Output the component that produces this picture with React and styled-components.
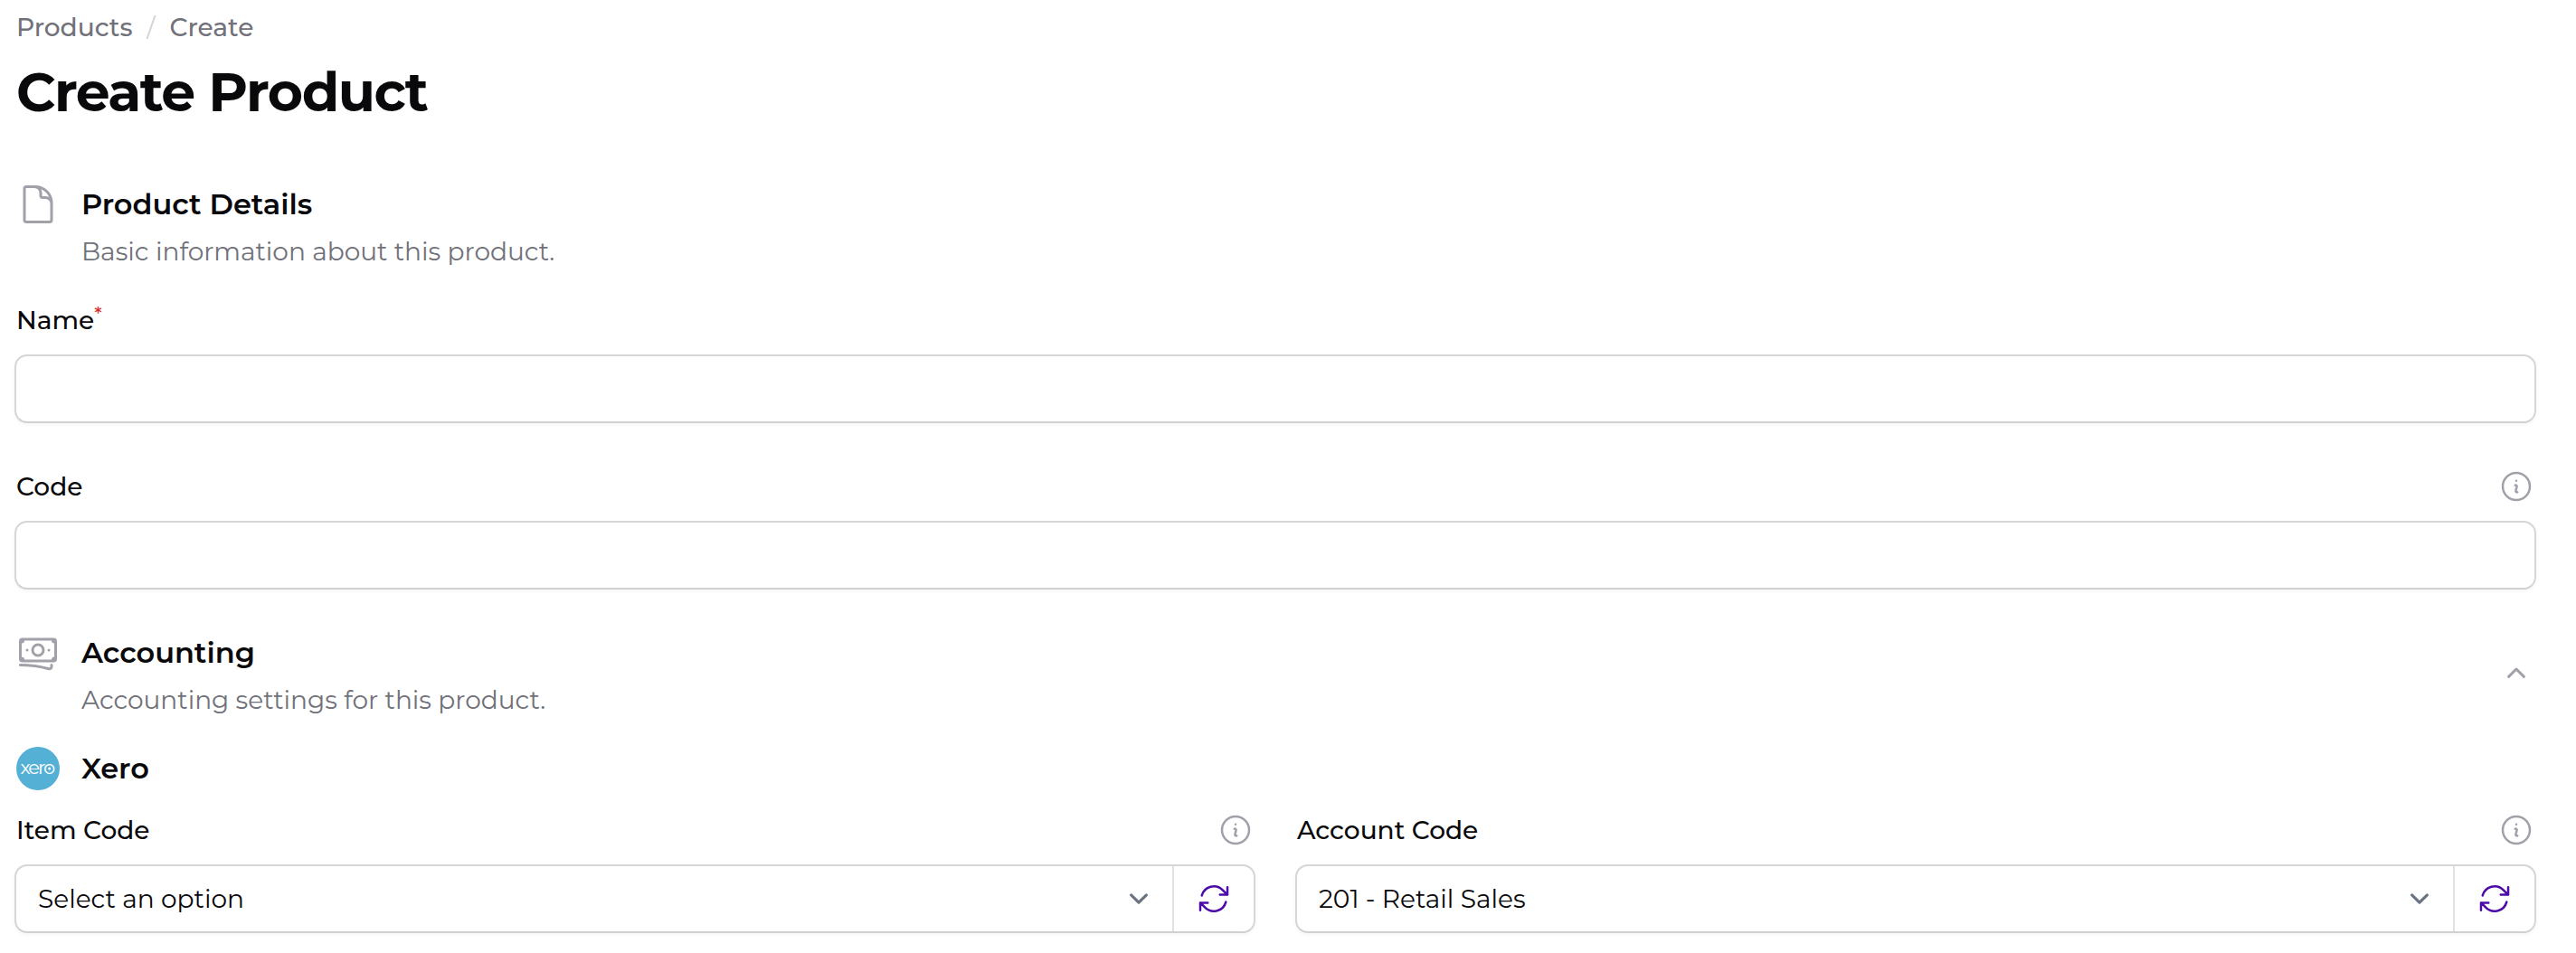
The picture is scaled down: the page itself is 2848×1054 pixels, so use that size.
import React from 'react';
import styled, { createGlobalStyle } from 'styled-components';
import {
  HiOutlineDocument,
  HiOutlineBanknotes,
  HiOutlineInformationCircle,
  HiOutlineArrowPath,
} from 'react-icons/hi2';

const GlobalStyle = createGlobalStyle`
  *, *::before, *::after { box-sizing: border-box; }
  body {
    margin: 0;
    background: #fff;
    color: #09090b;
    font-family: Montserrat, Inter, "Liberation Sans", sans-serif;
  }
`;

const Page = styled.main`
  min-height: 1054px;
  padding: 10px 44px 0 16px;
  display: flex;
  flex-direction: column;
`;

const Breadcrumbs = styled.nav`
  display: flex;
  align-items: center;
  height: 40px;
  padding-left: 2px;
`;

const Crumb = styled.a`
  font-size: 28px;
  font-weight: 500;
  line-height: 40px;
  color: #71717a;
`;

const Slash = styled.svg`
  width: 12px;
  height: 28px;
  margin: 0 14px 0 15px;
  stroke: #d4d4d8;
  stroke-width: 2;
  fill: none;
`;

const Title = styled.h1`
  margin: 16px 0 64px;
  padding-left: 2px;
  font-size: 60px;
  font-weight: 700;
  line-height: 72px;
  letter-spacing: -0.025em;
`;

const SectionHeader = styled.header`
  display: flex;
  align-items: flex-start;
  gap: 24px;
  padding: 0 2px;
  margin-top: ${(p) => p.$top || 0}px;
`;

const SectionIcon = styled.span`
  display: flex;
  width: 48px;
  height: 48px;
  color: #a1a1aa;
  svg { width: 48px; height: 48px; }
`;

const SectionText = styled.div`
  flex: 1;
  display: flex;
  flex-direction: column;
  gap: 4px;
`;

const SectionHeading = styled.h2`
  margin: 0;
  font-size: 32px;
  font-weight: 600;
  line-height: 48px;
`;

const Description = styled.p`
  margin: 0;
  font-size: 28px;
  font-weight: 400;
  line-height: 48px;
  color: #71717a;
`;

const Collapse = styled.button`
  display: flex;
  width: 40px;
  height: 40px;
  margin-top: 26px;
  padding: 0;
  border: 0;
  background: none;
  color: #a1a1aa;
  svg { width: 40px; height: 40px; }
`;

const Field = styled.div`
  display: flex;
  flex-direction: column;
  gap: 14px;
  margin-top: ${(p) => p.$top || 0}px;
`;

const LabelRow = styled.div`
  display: flex;
  align-items: center;
  justify-content: space-between;
  height: 48px;
  padding: 0 2px;
`;

const Label = styled.label`
  font-size: 28px;
  font-weight: 500;
  line-height: 48px;
`;

const Required = styled.sup`
  position: relative;
  top: -0.5em;
  font-size: 75%;
  line-height: 0;
  vertical-align: baseline;
  color: #dc2626;
`;

const Hint = styled.span`
  display: flex;
  color: #a1a1aa;
  svg { width: 40px; height: 40px; }
`;

const Control = styled.div`
  display: flex;
  height: 76px;
  border: 2px solid #d6d6d8;
  border-bottom-color: #d0d0d1;
  border-radius: 14px;
  background: #fff;
  box-shadow: 0 2px 4px rgba(0, 0, 0, 0.04);
`;

const TextInput = styled.input`
  flex: 1;
  padding: 0 24px;
  border: 0;
  outline: 0;
  background: transparent;
  font: inherit;
  font-size: 28px;
`;

const SelectValue = styled.div`
  flex: 1;
  display: flex;
  align-items: center;
  justify-content: space-between;
  padding: 0 16px 0 24px;
  font-size: 28px;
  line-height: 48px;
  svg { width: 42px; height: 42px; color: #6b7280; }
`;

const Refresh = styled.button`
  display: flex;
  align-items: center;
  justify-content: center;
  width: 90px;
  padding: 0;
  border: 0;
  border-left: 2px solid #e1e1e3;
  background: none;
  color: #4c0aa8;
  svg { width: 40px; height: 40px; }
`;

const Provider = styled.div`
  display: flex;
  align-items: center;
  gap: 24px;
  margin-top: 28px;
  padding-left: 2px;
`;

const Logo = styled.svg`
  width: 48px;
  height: 48px;
`;

const Columns = styled.div`
  display: grid;
  grid-template-columns: 1fr 1fr;
  gap: 44px;
  margin-top: 20px;
`;

const ChevronDown = () => (
  <svg viewBox="0 0 20 20" fill="none" stroke="currentColor" strokeWidth="1.5" strokeLinecap="round" strokeLinejoin="round">
    <path d="M6 8l4 4 4-4" />
  </svg>
);

const ChevronUp = () => (
  <svg viewBox="0 0 20 20" fill="none" stroke="currentColor" strokeWidth="1.5" strokeLinecap="round" strokeLinejoin="round">
    <path d="M5.8 12.2L10 8l4.2 4.2" />
  </svg>
);

const XeroLogo = () => (
  <Logo viewBox="0 0 48 48">
    <circle cx="24" cy="24" r="24" fill="#55b0d5" />
    <text x="4.6" y="29.6" fontFamily="Montserrat, Inter, sans-serif" fontSize="21" fontWeight="400" fill="#fff" textLength="38.6" lengthAdjust="spacing">xero</text>
    <circle cx="36.7" cy="24.1" r="1.5" fill="#fff" />
  </Logo>
);

function SelectField({ label, value }) {
  return (
    <Field>
      <LabelRow>
        <Label>{label}</Label>
        <Hint><HiOutlineInformationCircle /></Hint>
      </LabelRow>
      <Control>
        <SelectValue>
          {value}
          <ChevronDown />
        </SelectValue>
        <Refresh aria-label="Refresh"><HiOutlineArrowPath /></Refresh>
      </Control>
    </Field>
  );
}

export default function App() {
  return (
    <>
      <GlobalStyle />
      <Page>
        <Breadcrumbs>
          <Crumb>Products</Crumb>
          <Slash viewBox="0 0 12 28"><path d="M10.5 1L1.5 27" /></Slash>
          <Crumb>Create</Crumb>
        </Breadcrumbs>
        <Title>Create Product</Title>

        <SectionHeader>
          <SectionIcon><HiOutlineDocument /></SectionIcon>
          <SectionText>
            <SectionHeading>Product Details</SectionHeading>
            <Description>Basic information about this product.</Description>
          </SectionText>
        </SectionHeader>

        <Field $top={28}>
          <LabelRow>
            <Label>Name<Required>*</Required></Label>
          </LabelRow>
          <Control><TextInput /></Control>
        </Field>

        <Field $top={46}>
          <LabelRow>
            <Label>Code</Label>
            <Hint><HiOutlineInformationCircle /></Hint>
          </LabelRow>
          <Control><TextInput /></Control>
        </Field>

        <SectionHeader $top={46}>
          <SectionIcon><HiOutlineBanknotes /></SectionIcon>
          <SectionText>
            <SectionHeading>Accounting</SectionHeading>
            <Description>Accounting settings for this product.</Description>
          </SectionText>
          <Collapse aria-label="Collapse"><ChevronUp /></Collapse>
        </SectionHeader>

        <Provider>
          <XeroLogo />
          <SectionHeading>Xero</SectionHeading>
        </Provider>

        <Columns>
          <SelectField label="Item Code" value="Select an option" />
          <SelectField label="Account Code" value="201 - Retail Sales" />
        </Columns>
      </Page>
    </>
  );
}
